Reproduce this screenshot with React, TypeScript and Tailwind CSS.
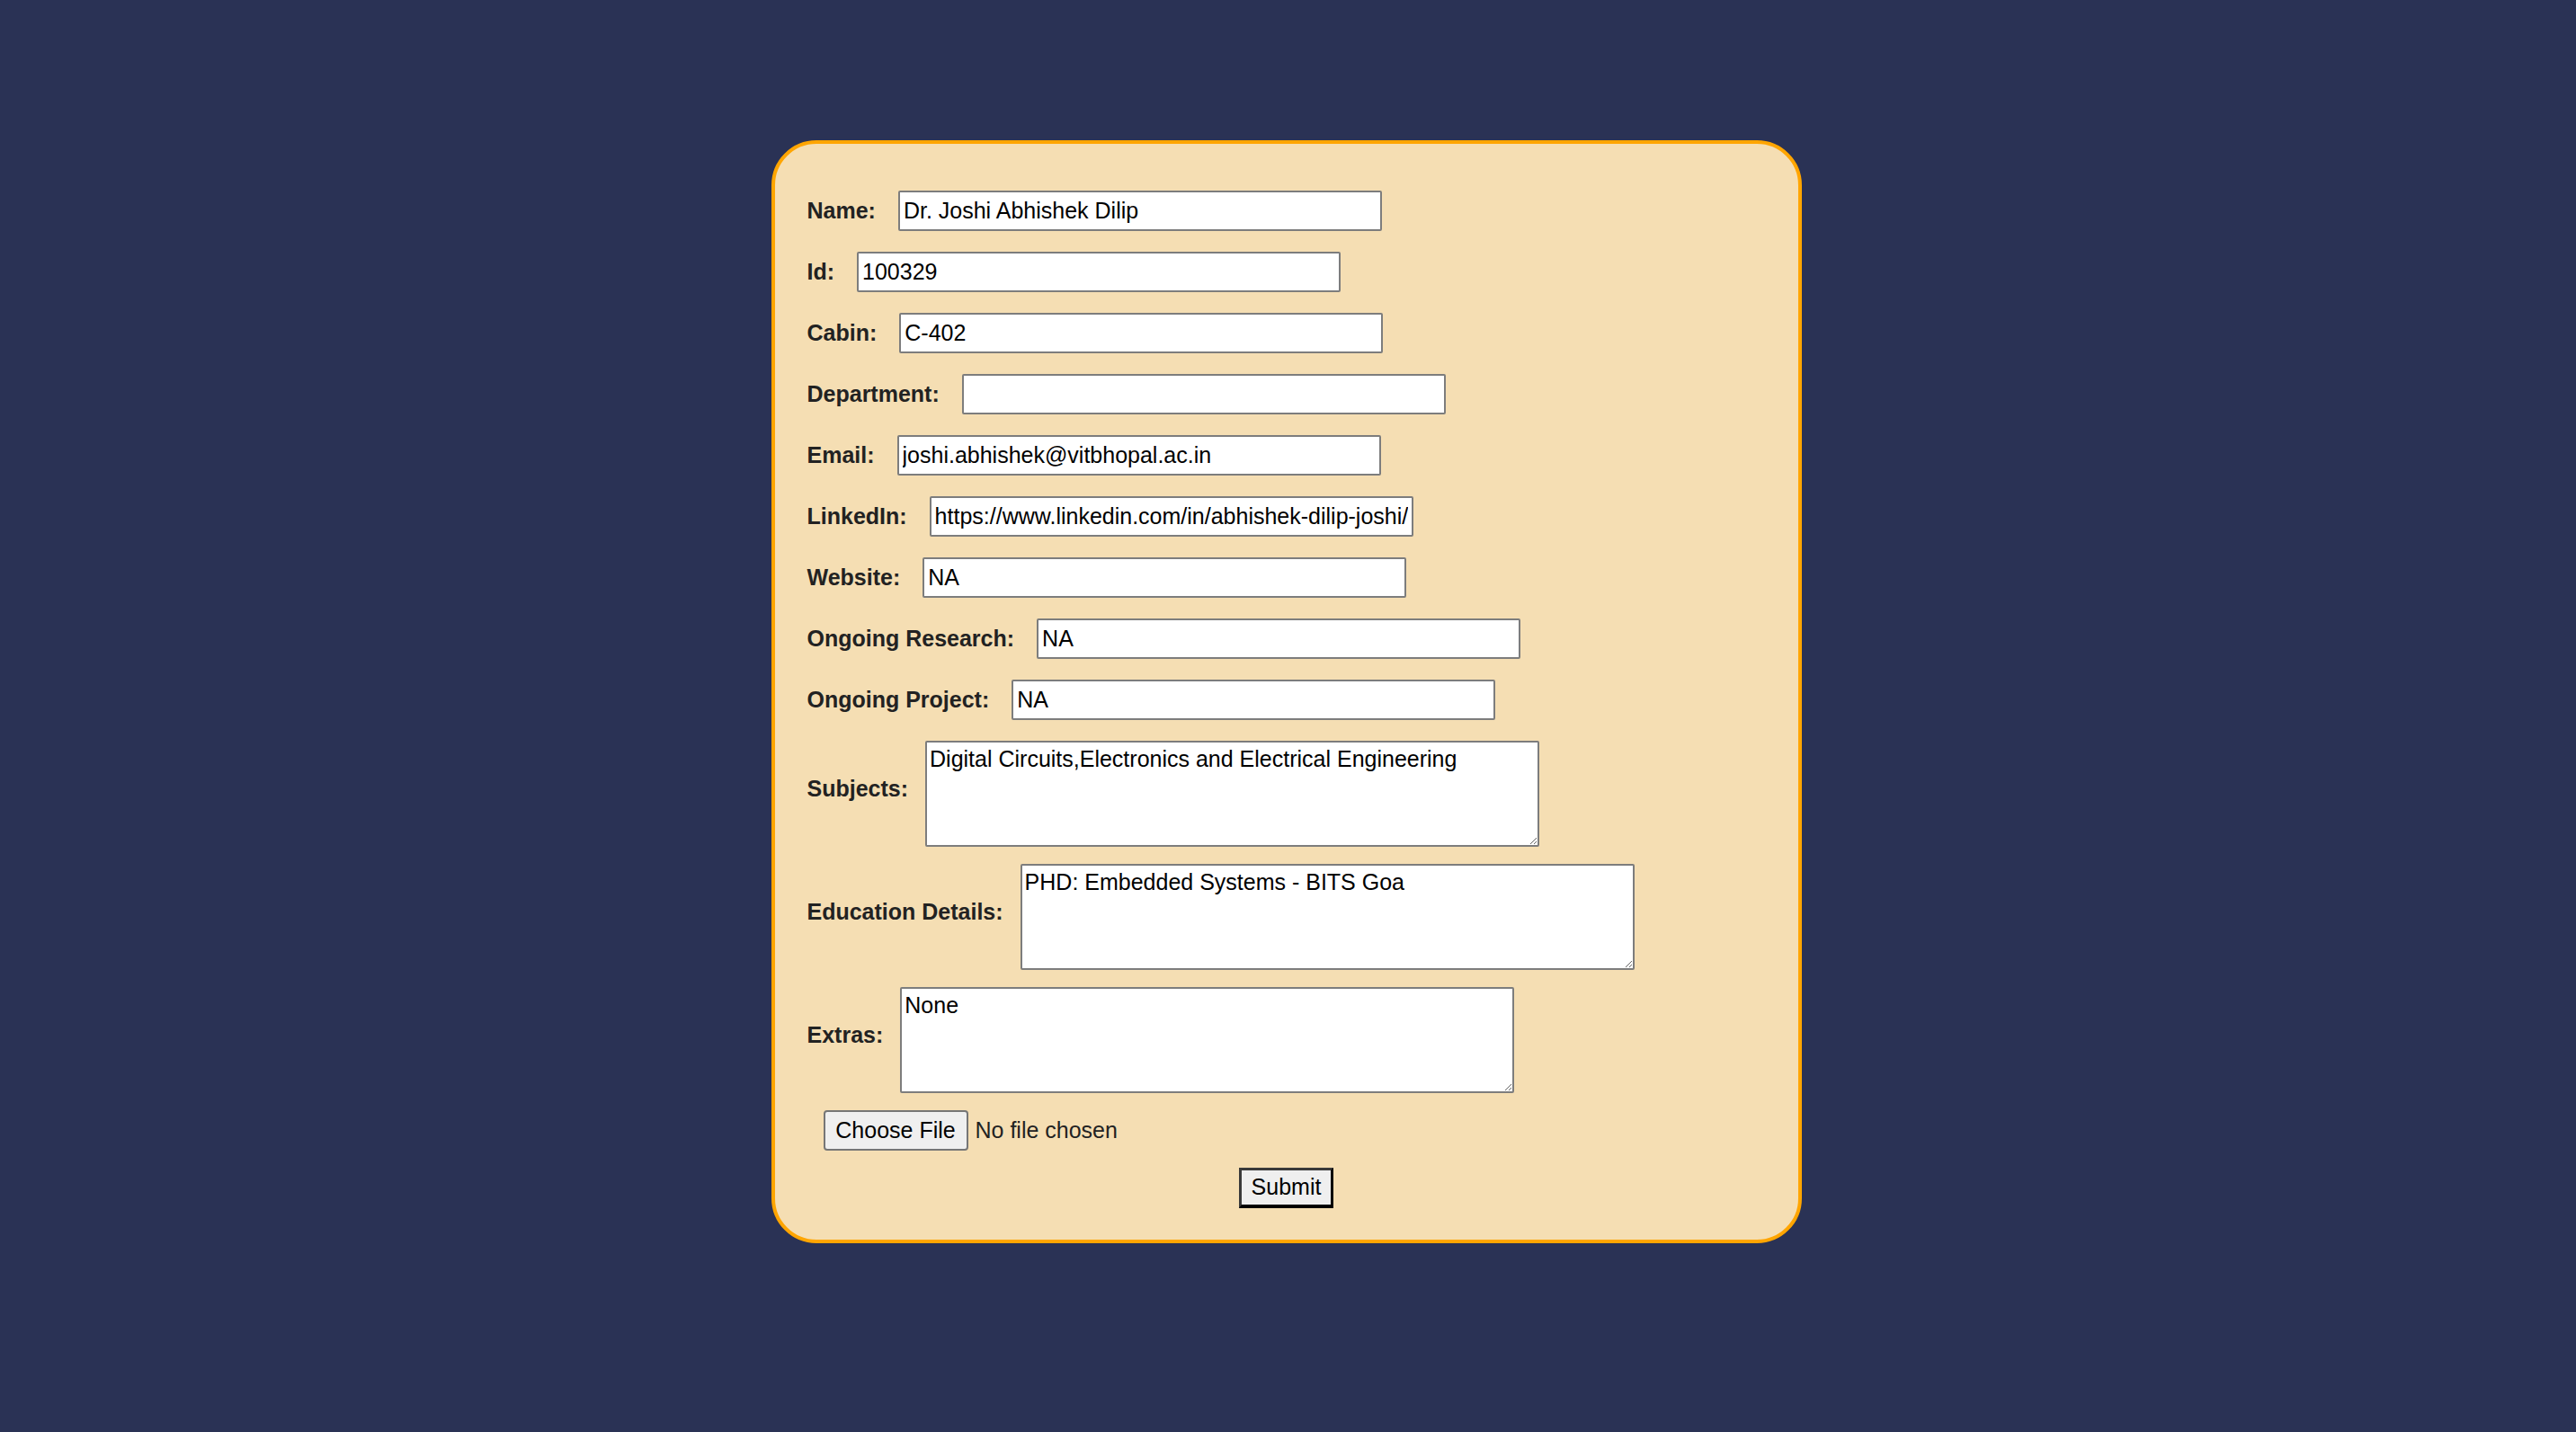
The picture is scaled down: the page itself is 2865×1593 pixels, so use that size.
import React from "react";

const font = { fontFamily: '"Liberation Sans", Arial, sans-serif' };

function Field({ label, value }: { label: string; value: string }) {
  return (
    <div className="flex items-center gap-[25px] mb-[23px]">
      <label className="text-[25px] font-bold text-[#222] leading-none whitespace-nowrap">{label}</label>
      <input
        type="text"
        defaultValue={value}
        className="w-[538px] h-[45px] bg-white border-2 border-[#7d7d7d] rounded-[2px] px-[4px] text-[25px] text-black outline-none"
      />
    </div>
  );
}

function AreaField({ label, value }: { label: string; value: string }) {
  return (
    <div className="flex items-center gap-[19px] mb-[19px]">
      <label className="text-[25px] font-bold text-[#222] leading-none whitespace-nowrap pb-[12px]">{label}</label>
      <textarea
        defaultValue={value}
        className="w-[683px] h-[118px] bg-white border-2 border-[#7d7d7d] rounded-[2px] pl-[3px] pt-[4px] text-[25px] leading-[29px] text-black outline-none resize"
      />
    </div>
  );
}

export default function App() {
  return (
    <div className="min-h-screen bg-[#2a3255] pt-[156px] pr-[4px]" style={font}>
      <form
        onSubmit={(e: React.FormEvent<HTMLFormElement>) => e.preventDefault()}
        className="mx-auto w-[1146px] bg-[#f5deb3] border-4 border-[#ffa500] rounded-[50px] pl-[36px] pt-[52px] pb-[35px]"
      >
        <Field label="Name:" value="Dr. Joshi Abhishek Dilip" />
        <Field label="Id:" value="100329" />
        <Field label="Cabin:" value="C-402" />
        <Field label="Department:" value="" />
        <Field label="Email:" value="joshi.abhishek@vitbhopal.ac.in" />
        <Field label="LinkedIn:" value="https://www.linkedin.com/in/abhishek-dilip-joshi/" />
        <Field label="Website:" value="NA" />
        <Field label="Ongoing Research:" value="NA" />
        <Field label="Ongoing Project:" value="NA" />
        <AreaField label="Subjects:" value="Digital Circuits,Electronics and Electrical Engineering" />
        <AreaField label="Education Details:" value="PHD: Embedded Systems - BITS Goa" />
        <AreaField label="Extras:" value="None" />

        <div className="flex items-center gap-[8px] ml-[18px] mb-[19px]">
          <button
            type="button"
            className="w-[161px] h-[45px] bg-[#efefef] border-2 border-[#767676] rounded-[4px] text-[25px] text-black"
          >
            Choose File
          </button>
          <span className="text-[25px] text-[#222]">No file chosen</span>
        </div>

        <div className="flex justify-center pr-[36px]">
          <button
            type="submit"
            className="w-[105px] h-[45px] bg-[#efefef] border-[3px] border-t-[#3a3a3a] border-l-[#3a3a3a] border-r-black border-b-black border-b-4 text-[25px] text-black"
          >
            Submit
          </button>
        </div>
      </form>
    </div>
  );
}
